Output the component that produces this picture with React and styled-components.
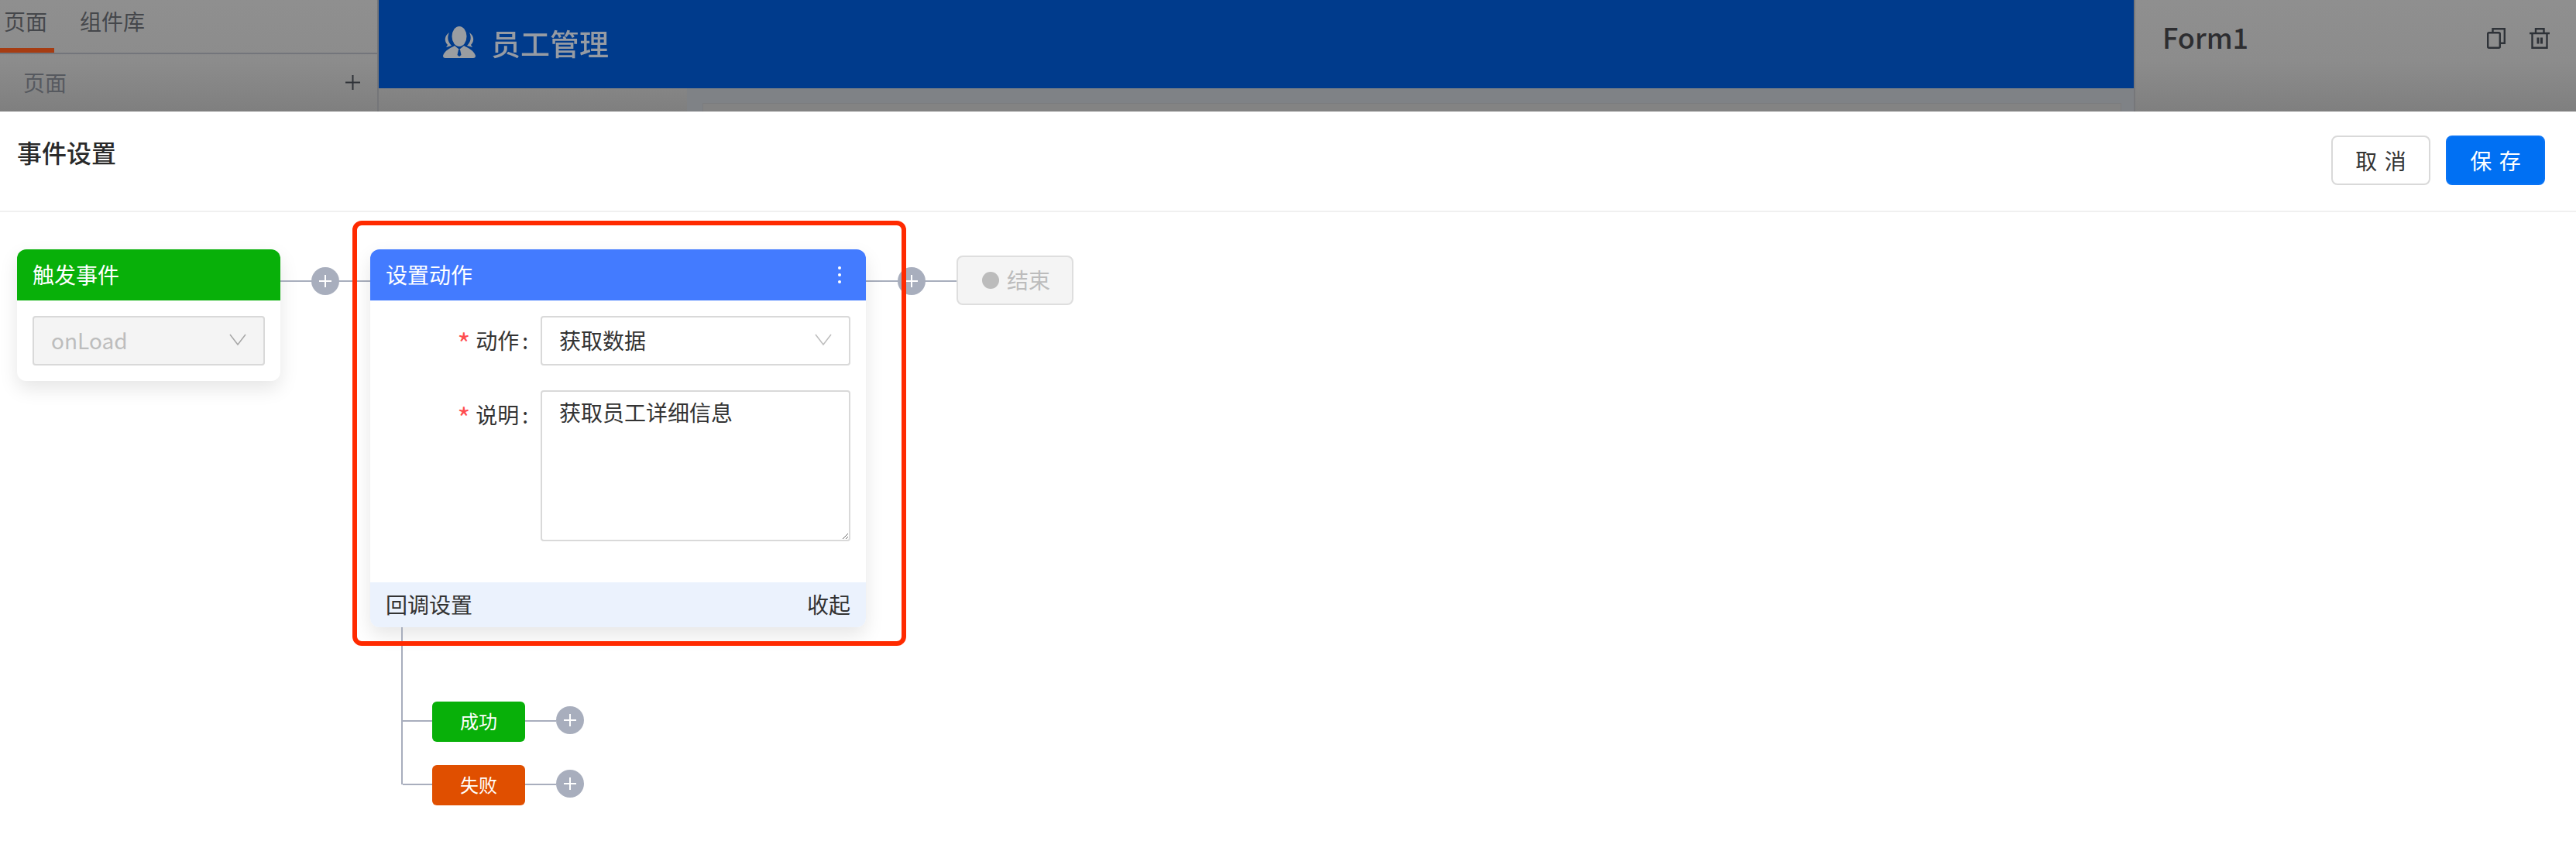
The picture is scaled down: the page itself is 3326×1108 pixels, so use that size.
import React from 'react'
import styled, { createGlobalStyle } from 'styled-components'

const GlobalStyle = createGlobalStyle`
    html, body {
        margin: 0;
        padding: 0;
        background: #fff;
    }
    * {
        box-sizing: border-box;
    }
    body {
        font-family: "Noto Sans CJK SC", "Noto Sans", sans-serif;
        color: #2c2c2c;
    }
`

const greyFade = 'linear-gradient(180deg, #8f8f8f 0%, #8c8c8c 55%, #7f7f7f 100%)'

const Page = styled.div`
    width: 3326px;
    height: 1108px;
    overflow: hidden;
    background: #fff;
`

/* dimmed editor behind the modal */
const Backdrop = styled.div`
    display: flex;
    height: 144px;
    overflow: hidden;
`
const SidePanel = styled.aside`
    width: 489px;
    flex: none;
    background: ${greyFade};
    border-right: 2px solid #757679;
`
const TabBar = styled.div`
    display: flex;
    height: 70px;
    gap: 42px;
    padding-left: 5px;
    border-bottom: 2px solid #73757b;
    position: relative;
    &::after {
        content: "";
        position: absolute;
        left: 0;
        bottom: 0;
        width: 70px;
        height: 6px;
        background: #a63c12;
    }
`
const Tab = styled.div`
    font-size: 28px;
    line-height: 54px;
    color: #45474b;
`
const SubHead = styled.div`
    display: flex;
    justify-content: space-between;
    align-items: center;
    height: 66px;
    padding: 6px 22px 0 30px;
    font-size: 28px;
    color: #56595f;
`
const PlusMark = styled.svg`
    width: 19px;
    height: 19px;
    stroke: #2f3238;
    stroke-width: 2;
`
const Center = styled.div`
    flex: 1;
    display: flex;
    flex-direction: column;
    background: ${greyFade};
    border-right: 2px solid #76777a;
`
const BlueBar = styled.div`
    flex: none;
    display: flex;
    align-items: center;
    height: 114px;
    padding: 0 0 0 81px;
    background: #003b8c;
`
const Blurred = styled.div`
    display: flex;
    align-items: center;
    gap: 18px;
    margin-top: -6px;
    filter: blur(0.7px);
`
const AppTitle = styled.div`
    font-size: 38px;
    font-weight: 500;
    color: #969ba3;
`
const Stage = styled.div`
    flex: 1;
    margin-left: 398px;
    padding: 19px 16px 0 20px;
    background: #7f8286;
`
const StageSheet = styled.div`
    height: 100%;
    background: #838383;
    border: 1px solid #7b7c7e;
    border-bottom: 0;
`
const RightPanel = styled.aside`
    width: 569px;
    flex: none;
    display: flex;
    justify-content: space-between;
    padding: 20px 34px 0 35px;
    background: ${greyFade};
`
const FormName = styled.div`
    font-size: 36px;
    line-height: 54px;
    font-weight: 500;
    color: #2d2d30;
`
const PanelIcons = styled.div`
    display: flex;
    gap: 30px;
    height: 54px;
    margin-top: 2px;
    align-items: center;
    svg {
        fill: none;
        stroke: #2e3238;
        stroke-width: 2.4;
    }
`

/* modal */
const ModalHead = styled.header`
    display: flex;
    justify-content: space-between;
    align-items: center;
    height: 130px;
    padding: 0 40px 0 22px;
    border-bottom: 2px solid #f0f0f0;
`
const ModalTitle = styled.h2`
    margin: 0 0 24px;
    font-size: 32px;
    font-weight: 500;
    color: #2a2a2a;
`
const Actions = styled.div`
    display: flex;
    gap: 20px;
    margin-bottom: 2px;
`
const Button = styled.button`
    width: 128px;
    height: 64px;
    padding: 0;
    border-radius: 8px;
    font: inherit;
    font-size: 28px;
    word-spacing: 3px;
    border: 2px solid ${p => p.$primary ? '#0a74f5' : '#d9d9d9'};
    background: ${p => p.$primary ? '#0070f3' : '#fff'};
    color: ${p => p.$primary ? '#fff' : '#333'};
`

/* flow canvas */
const Canvas = styled.div`
    display: flex;
    align-items: flex-start;
    padding: 48px 0 0 22px;
`
const Card = styled.section`
    flex: none;
    width: ${p => p.$width}px;
    background: #fff;
    border-radius: 12px;
    box-shadow: 0 10px 24px rgba(0, 0, 0, 0.1);
`
const CardHead = styled.div`
    display: flex;
    justify-content: space-between;
    align-items: center;
    height: 66px;
    padding: 0 20px 3px;
    border-radius: 12px 12px 0 0;
    font-size: 28px;
    color: #fff;
    background: ${p => p.$color};
`
const Dots = styled.svg`
    width: 8px;
    height: 24px;
    margin: 2px 10px 0 0;
    fill: #fff;
`
const Select = styled.div`
    display: flex;
    justify-content: space-between;
    align-items: center;
    height: 64px;
    width: ${p => p.$width}px;
    padding: 0 22px 2px 22px;
    border: 2px solid #d9d9d9;
    border-radius: 4px;
    font-size: 28px;
    background: ${p => p.$disabled ? '#f4f4f4' : '#fff'};
    color: ${p => p.$disabled ? '#bdbdbd' : '#333'};
`
const Chevron = styled.svg`
    width: 22px;
    height: 15px;
    margin-bottom: 2px;
    fill: none;
    stroke: ${p => p.$dark ? '#a8a8a8' : '#bfbfbf'};
    stroke-width: 1.6;
`
const TriggerBody = styled.div`
    padding: 20px 20px;
`
const Connector = styled.div`
    flex: none;
    width: ${p => p.$width}px;
    margin-top: 40px;
    height: 2px;
    background: #a8aebd;
    display: flex;
    justify-content: center;
    align-items: center;
`
const AddDot = styled.div`
    flex: none;
    width: 36px;
    height: 36px;
    margin-top: ${p => p.$raise ? '-4px' : '0'};
    border-radius: 50%;
    background: #a8aebd;
    display: flex;
    justify-content: center;
    align-items: center;
    svg {
        width: 18px;
        height: 18px;
        stroke: #fff;
        stroke-width: 2;
    }
`
const ActionColumn = styled.div`
    flex: none;
    position: relative;
    width: 640px;
`
const Highlight = styled.div`
    position: absolute;
    left: -23px;
    top: -37px;
    width: 715px;
    height: 549px;
    border: 6px solid #ff2a00;
    border-radius: 12px;
    pointer-events: none;
`
const Form = styled.div`
    padding: 20px 20px 53px;
    display: flex;
    flex-direction: column;
    gap: 32px;
`
const Row = styled.div`
    display: flex;
    justify-content: flex-end;
    gap: 16px;
`
const Label = styled.label`
    font-size: 28px;
    line-height: 62px;
    color: #333;
    &::before {
        content: "*";
        position: relative;
        top: 7px;
        margin-right: 7px;
        font-size: 36px;
        line-height: 1;
        color: #ff4d4f;
    }
    &::after {
        content: ":";
        margin-left: 4px;
    }
`
const Area = styled.textarea`
    display: block;
    width: 400px;
    height: 195px;
    padding: 6px 22px;
    border: 2px solid #d9d9d9;
    border-radius: 4px;
    outline: none;
    font: inherit;
    font-size: 28px;
    line-height: 40px;
    color: #333;
    background: #fff;
`
const CardFoot = styled.div`
    display: flex;
    justify-content: space-between;
    align-items: center;
    height: 58px;
    padding: 0 20px 3px;
    background: #ebf2fd;
    border-radius: 0 0 12px 12px;
    font-size: 28px;
    color: #333;
`
const Branches = styled.div`
    margin-left: 40px;
    height: 203px;
    padding-top: 96px;
    border-left: 2px solid #a8aebd;
    display: flex;
    flex-direction: column;
    gap: 30px;
`
const BranchRow = styled.div`
    display: flex;
    align-items: center;
    height: 52px;
`
const Wire = styled.div`
    width: ${p => p.$width}px;
    height: 2px;
    margin-top: -2px;
    background: #a8aebd;
`
const Tag = styled.div`
    width: 120px;
    height: 52px;
    line-height: 50px;
    text-align: center;
    border-radius: 6px;
    font-size: 24px;
    color: #fff;
    background: ${p => p.$color};
`
const EndNode = styled.div`
    flex: none;
    display: flex;
    align-items: center;
    gap: 10px;
    width: 151px;
    height: 64px;
    margin-top: 8px;
    padding: 0 0 2px 31px;
    border: 2px solid #dedede;
    border-radius: 8px;
    background: #f4f4f4;
    font-size: 28px;
    color: #bcbcbc;
    &::before {
        content: "";
        width: 22px;
        height: 22px;
        margin-top: 2px;
        border-radius: 50%;
        background: #bcbcbc;
    }
`

const Add = ({ raise }) => (
    <AddDot $raise={raise}>
        <svg viewBox="0 0 18 18"><path d="M9 1v16M1 9h16" /></svg>
    </AddDot>
)

const Arrow = ({ dark }) => (
    <Chevron $dark={dark} viewBox="0 0 22 15"><path d="M1 1l10 13L21 1" /></Chevron>
)

const Logo = () => (
    <svg width="46" height="41" viewBox="0 0 46 41" fill="#9a9da1">
        <ellipse cx="23" cy="13" rx="9.5" ry="13" />
        <path d="M2 38C4 31 12 28 17 25l6 5 6-5c5 3 13 6 15 13 0 2-1 3-3 3H5c-2 0-3-1-3-3z" />
        <path d="M10 8C4 12 3 19 8 24l-2 3 7-2C8 20 7 14 10 8zM36 8c6 4 7 11 2 16l2 3-7-2c5-5 6-11 3-17z" />
        <path fill="#003b8c" d="M22 30h2l1.5 7-2.5 2-2.5-2z" />
    </svg>
)

export default function App() {
    return (
        <Page>
            <GlobalStyle />
            <Backdrop>
                <SidePanel>
                    <TabBar>
                        <Tab>页面</Tab>
                        <Tab>组件库</Tab>
                    </TabBar>
                    <SubHead>
                        页面
                        <PlusMark viewBox="0 0 19 19"><path d="M9.5 0v19M0 9.5h19" /></PlusMark>
                    </SubHead>
                </SidePanel>
                <Center>
                    <BlueBar>
                        <Blurred>
                            <Logo />
                            <AppTitle>员工管理</AppTitle>
                        </Blurred>
                    </BlueBar>
                    <Stage><StageSheet /></Stage>
                </Center>
                <RightPanel>
                    <FormName>Form1</FormName>
                    <PanelIcons>
                        <svg width="25" height="27" viewBox="0 0 25 27">
                            <rect x="1.2" y="6.2" width="15.6" height="19.6" rx="1.5" />
                            <path d="M7.5 6V1.2h15.3v18.6h-6" />
                        </svg>
                        <svg width="26" height="27" viewBox="0 0 26 27">
                            <path d="M0 7h26M8 7V1.2h10.5V7M3.5 7v18.8h19V7" />
                            <path strokeWidth="3" d="M11 12.5v8M15.5 12.5v8" />
                        </svg>
                    </PanelIcons>
                </RightPanel>
            </Backdrop>
            <ModalHead>
                <ModalTitle>事件设置</ModalTitle>
                <Actions>
                    <Button>取 消</Button>
                    <Button $primary>保 存</Button>
                </Actions>
            </ModalHead>
            <Canvas>
                <Card $width={340}>
                    <CardHead $color="#08b009">触发事件</CardHead>
                    <TriggerBody>
                        <Select $width={300} $disabled>onLoad<Arrow dark /></Select>
                    </TriggerBody>
                </Card>
                <Connector $width={116}><Add /></Connector>
                <ActionColumn>
                    <Card $width={640}>
                        <CardHead $color="#437bff">
                            设置动作
                            <Dots viewBox="0 0 8 24">
                                <circle cx="4" cy="3" r="2" />
                                <circle cx="4" cy="12" r="2" />
                                <circle cx="4" cy="21" r="2" />
                            </Dots>
                        </CardHead>
                        <Form>
                            <Row>
                                <Label>动作</Label>
                                <Select $width={400}>获取数据<Arrow /></Select>
                            </Row>
                            <Row>
                                <Label>说明</Label>
                                <Area readOnly value="获取员工详细信息" />
                            </Row>
                        </Form>
                        <CardFoot>
                            <span>回调设置</span>
                            <span>收起</span>
                        </CardFoot>
                    </Card>
                    <Branches>
                        <BranchRow>
                            <Wire $width={38} />
                            <Tag $color="#08b009">成功</Tag>
                            <Wire $width={40} />
                            <Add raise />
                        </BranchRow>
                        <BranchRow>
                            <Wire $width={38} />
                            <Tag $color="#e04f00">失败</Tag>
                            <Wire $width={40} />
                            <Add raise />
                        </BranchRow>
                    </Branches>
                    <Highlight />
                </ActionColumn>
                <Connector $width={117}><Add /></Connector>
                <EndNode>结束</EndNode>
            </Canvas>
        </Page>
    )
}
